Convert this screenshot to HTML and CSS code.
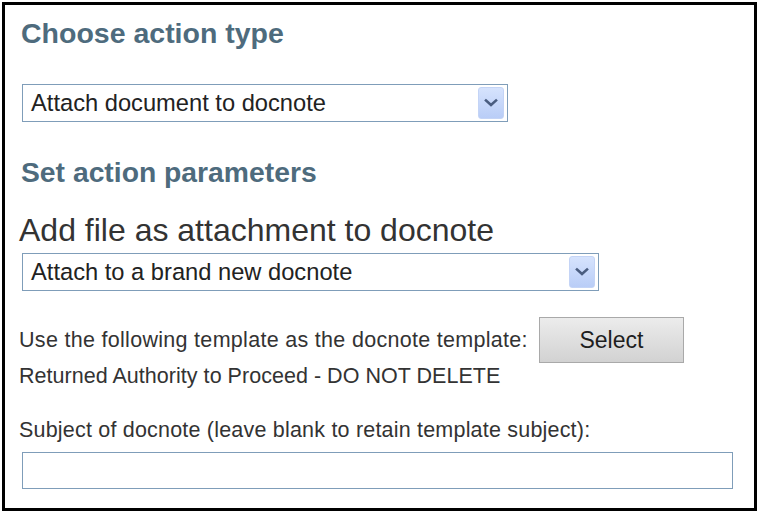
FILE: index.html
```html
<!DOCTYPE html>
<html>
<head>
<meta charset="utf-8">
<title>Action</title>
<link rel="stylesheet" href="styles.css">
</head>
<body>
<div class="panel">
  <h2 class="heading heading-first">Choose action type</h2>
  <div class="dropdown dropdown-type">
    <span class="dropdown-text">Attach document to docnote</span>
    <span class="dropdown-btn"><svg width="14" height="10" viewBox="0 0 14 10"><path d="M2 2.5 L7 7 L12 2.5" fill="none" stroke="#4a5d80" stroke-width="2.6" stroke-linecap="square"/></svg></span>
  </div>
  <h3 class="heading heading-second">Set action parameters</h3>
  <div class="action-title">Add file as attachment to docnote</div>
  <div class="dropdown dropdown-mode">
    <span class="dropdown-text">Attach to a brand new docnote</span>
    <span class="dropdown-btn"><svg width="14" height="10" viewBox="0 0 14 10"><path d="M2 2.5 L7 7 L12 2.5" fill="none" stroke="#4a5d80" stroke-width="2.6" stroke-linecap="square"/></svg></span>
  </div>
  <div class="template-row">
    <span class="label">Use the following template as the docnote template:</span>
    <button class="select-btn">Select</button>
  </div>
  <div class="label template-name">Returned Authority to Proceed - DO NOT DELETE</div>
  <div class="label subject-label">Subject of docnote (leave blank to retain template subject):</div>
  <div class="text-input"></div>
</div>
</body>
</html>
```

FILE: styles.css
```css
html, body {
  margin: 0;
  padding: 0;
  background: #ffffff;
}
body {
  padding: 2px 0 0 2px;
  font-family: "Liberation Sans", Arial, sans-serif;
  color: #333333;
}
.panel {
  box-sizing: border-box;
  width: 755px;
  height: 509px;
  border: 3px solid #000000;
  padding: 0 0 0 14px;
  overflow: hidden;
}
.heading {
  margin: 0;
  font-weight: bold;
  font-size: 28.5px;
  line-height: 32px;
  color: #4e6b7d;
  padding-left: 2px;
}
.heading-first {
  margin-top: 12px;
}
.heading-second {
  margin-top: 34px;
  font-size: 28.3px;
}
.dropdown {
  box-sizing: border-box;
  margin-left: 3px;
  height: 38px;
  border: 1px solid #7f9db9;
  display: flex;
  align-items: center;
  justify-content: space-between;
  padding: 0 3px 0 8px;
  background: #fff;
}
.dropdown-type {
  width: 486px;
  margin-top: 35px;
}
.dropdown-mode {
  width: 577px;
  margin-top: 5px;
}
.dropdown-text {
  font-size: 23.7px;
  color: #222;
}
.dropdown-btn {
  box-sizing: border-box;
  width: 26px;
  height: 32px;
  border-radius: 3px;
  border: 1px solid #c4d4f6;
  background: linear-gradient(#d6e3fd, #b9cdf7);
  display: flex;
  align-items: center;
  justify-content: center;
}
.action-title {
  margin-top: 24px;
  font-size: 32px;
  line-height: 36px;
  color: #333;
}
.template-row {
  margin-top: 26px;
  display: flex;
  align-items: center;
  gap: 11px;
}
.label {
  font-size: 21.5px;
  line-height: 24px;
  letter-spacing: 0.3px;
  color: #333333;
}
.select-btn {
  box-sizing: border-box;
  width: 145px;
  height: 46px;
  border: 1px solid #a9a9a9;
  background: linear-gradient(#ececec, #d2d2d2);
  font-family: "Liberation Sans", Arial, sans-serif;
  font-size: 23px;
  color: #1e1e1e;
  padding: 0;
}
.template-name {
  margin-top: 1px;
  letter-spacing: 0.03px;
}
.subject-label {
  margin-top: 30px;
  letter-spacing: 0.2px;
}
.text-input {
  box-sizing: border-box;
  margin-left: 3px;
  margin-top: 10px;
  width: 711px;
  height: 37px;
  border: 1px solid #7f9db9;
}
```
